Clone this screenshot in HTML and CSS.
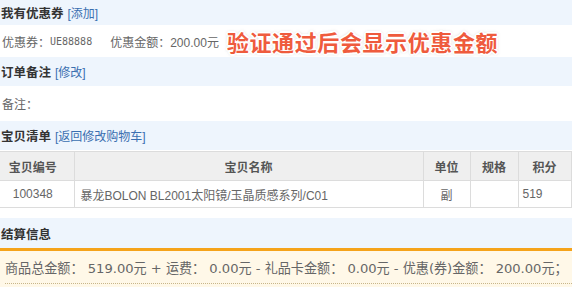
FILE: index.html
```html
<!DOCTYPE html>
<html lang="zh-CN">
<head>
<meta charset="utf-8">
<link rel="stylesheet" href="styles.css">
</head>
<body>
<div class="page">
  <div class="bar bar-first"><span class="bar-title">我有优惠券</span><a class="bar-link">[添加]</a></div>
  <div class="row row-coupon">
    <span class="lbl">优惠券：</span><span class="code">UE88888</span>
    <span class="lbl amount">优惠金额：200.00元</span>
    <span class="note">验证通过后会显示优惠金额</span>
  </div>
  <div class="bar"><span class="bar-title">订单备注</span><a class="bar-link">[修改]</a></div>
  <div class="row row-remark"><span class="lbl">备注：</span></div>
  <div class="bar"><span class="bar-title">宝贝清单</span><a class="bar-link">[返回修改购物车]</a></div>
  <table class="goods">
    <thead>
      <tr>
        <th class="c-id">宝贝编号</th>
        <th class="c-name">宝贝名称</th>
        <th class="c-unit">单位</th>
        <th class="c-spec">规格</th>
        <th class="c-pts">积分</th>
      </tr>
    </thead>
    <tbody>
      <tr>
        <td class="c-id">100348</td>
        <td class="c-name left">暴龙BOLON BL2001太阳镜/玉晶质感系列/C01</td>
        <td class="c-unit">副</td>
        <td class="c-spec"></td>
        <td class="c-pts left">519</td>
      </tr>
    </tbody>
  </table>
  <div class="bar bar-settle"><span class="bar-title">结算信息</span></div>
  <div class="settle">
    <div class="settle-line">商品总金额： 519.00元 + 运费： 0.00元 - 礼品卡金额： 0.00元 - 优惠(券)金额： 200.00元；</div>
  </div>
</div>
</body>
</html>
```
FILE: styles.css
```css
* { box-sizing: border-box; }
html, body { margin: 0; padding: 0; background: #fff; }
body {
  font-family: "Liberation Sans", "Noto Sans CJK SC", sans-serif;
  font-size: 12px;
  color: #555;
  width: 572px;
  height: 287px;
  overflow: hidden;
}
.page { display: flex; flex-direction: column; }
.bar {
  display: flex;
  align-items: center;
  height: 29px;
  padding-left: 1px;
  background: #eef5fd;
}
.bar-first { height: 25px; }
.bar-title { font-weight: bold; color: #333; font-size: 12.5px; }
.bar-link { color: #3a6fb0; margin-left: 4px; }
.row { display: flex; align-items: center; padding-left: 2px; }
.row-coupon { height: 32px; }
.row-remark { height: 35px; }
.lbl { color: #666; }
.code { font-family: "DejaVu Sans Mono", monospace; font-size: 10px; color: #666; }
.amount { margin-left: 18px; }
.note {
  margin-left: 8px;
  font-size: 22px;
  font-weight: bold;
  color: #ef5b3d;
  letter-spacing: 0.6px;
  text-shadow:
    1px 1px 0 #fff, -1px -1px 0 #fff, 1px -1px 0 #fff, -1px 1px 0 #fff,
    2px 0 0 #fff, -2px 0 0 #fff, 0 2px 0 #fff, 0 -2px 0 #fff,
    0 0 3px #bbb, 0 0 4px #ccc;
}
.goods {
  border-collapse: collapse;
  width: 571px;
  margin-top: 1px;
  table-layout: fixed;
}
.goods th, .goods td {
  border: 1px solid #dcdcdc;
  text-align: center;
  padding: 0;
}
.goods tr > :first-child { border-left: none; }
.goods th {
  height: 29px;
  background: #efefef;
  color: #555;
  font-weight: bold;
}
.goods td { height: 27px; color: #666; }
.goods td.left { text-align: left; }
.c-id { width: 74px; padding-right: 8px !important; }
.c-name { width: 349px; }
.goods td.c-name { padding-left: 6px; }
.c-unit { width: 47px; }
.c-spec { width: 48px; }
.c-pts { width: 53px; }
.goods td.c-pts { padding-left: 4px; }
.bar-settle { margin-top: 10px; height: 30px; }
.settle {
  border-top: 3px solid #f5a31a;
  background: #fff8e8;
  height: 40px;
  padding: 0 0 0 5px;
}
.settle-line {
  height: 33px;
  display: flex;
  align-items: center;
  font-family: "DejaVu Sans", "Noto Sans CJK SC", sans-serif;
  font-size: 13.1px;
  color: #666;
  white-space: nowrap;
  border-bottom: 1px dotted #c8b68a;
}
```
